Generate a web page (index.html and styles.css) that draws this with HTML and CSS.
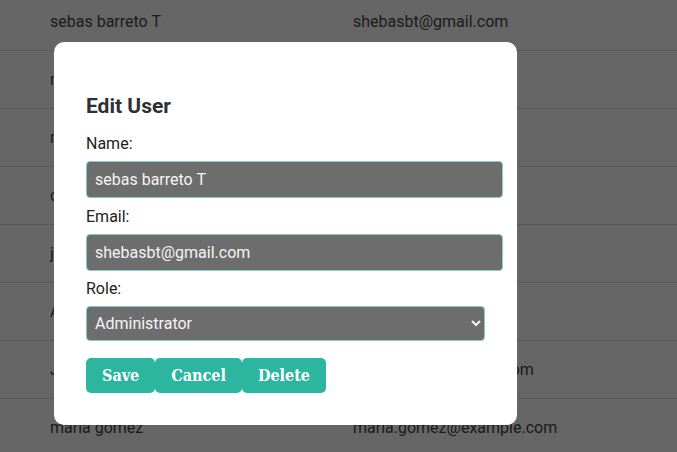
FILE: index.html
```html
<!DOCTYPE html>
<html lang="en">
<head>
<meta charset="utf-8">
<title>Users</title>
<link rel="stylesheet" href="styles.css">
</head>
<body>
<div class="users">
  <div class="row"><span class="name">sebas barreto T</span><span class="email">shebasbt@gmail.com</span></div>
  <div class="row"><span class="name">maria lopez</span><span class="email">maria@mail.com</span></div>
  <div class="row"><span class="name">mario perez</span><span class="email">mario@mail.com</span></div>
  <div class="row"><span class="name">carlos diaz</span><span class="email">carlos@mail.com</span></div>
  <div class="row"><span class="name">juan torres</span><span class="email">juan@mail.com</span></div>
  <div class="row"><span class="name">Ana ruiz</span><span class="email">ana@mail.com</span></div>
  <div class="row"><span class="name">Jose martin</span><span class="email">jose.rubio@example.com</span></div>
  <div class="row"><span class="name">maria gomez</span><span class="email">maria.gomez@example.com</span></div>
</div>

<div class="overlay">
  <div class="modal">
    <h2 class="modal-title">Edit User</h2>
    <form class="form">
      <label class="label" for="name">Name:</label>
      <input class="field" id="name" type="text" value="sebas barreto T">
      <label class="label" for="email">Email:</label>
      <input class="field" id="email" type="email" value="shebasbt@gmail.com">
      <label class="label" for="role">Role:</label>
      <select class="field select" id="role">
        <option>Administrator</option>
        <option>User</option>
      </select>
      <div class="actions">
        <button type="button" class="btn">Save</button>
        <button type="button" class="btn">Cancel</button>
        <button type="button" class="btn">Delete</button>
      </div>
    </form>
  </div>
</div>
</body>
</html>
```
FILE: styles.css
```css
html, body {
  margin: 0;
  padding: 0;
  background: #ffffff;
  font-family: Roboto, "Liberation Sans", sans-serif;
}

.users {
  margin-top: -7px;
}

.row {
  display: flex;
  align-items: center;
  height: 57px;
  border-bottom: 1px solid #dddddd;
  padding-left: 50px;
  font-size: 16px;
  color: #484848;
}

.name {
  width: 303px;
}

.overlay {
  position: fixed;
  inset: 0;
  background: rgba(0, 0, 0, 0.6);
  display: flex;
  align-items: flex-start;
  justify-content: flex-start;
}

.modal {
  margin: 42px 0 0 54px;
  width: 399px;
  padding: 32px;
  background: #ffffff;
  border-radius: 10px;
}

.modal-title {
  margin: 20px 0 16px;
  font-size: 21px;
  font-weight: 700;
  color: #2d3135;
}

.form {
  display: flex;
  flex-direction: column;
  align-items: flex-start;
}

.label {
  font-size: 16px;
  color: #222222;
  margin-bottom: 8px;
}

.field {
  box-sizing: content-box;
  width: 100%;
  padding: 8px;
  margin: 0 0 8.5px;
  border: 1px solid #80d0c2;
  border-radius: 4px;
  background: #6d6d6d;
  color: #f4f4f4;
  font-family: Roboto, "Liberation Sans", sans-serif;
  font-size: 16px;
  outline: none;
}

.select {
  box-sizing: border-box;
  width: 100%;
  height: 35px;
  padding: 0 4px;
}

.actions {
  display: flex;
  margin-top: 8.5px;
}

.btn {
  border: none;
  border-radius: 5px;
  background: #2cb59f;
  color: #ffffff;
  font-family: "DejaVu Serif", serif;
  font-stretch: condensed;
  font-weight: 700;
  font-size: 16px;
  line-height: 17px;
  padding: 9px 16px;
}
```
